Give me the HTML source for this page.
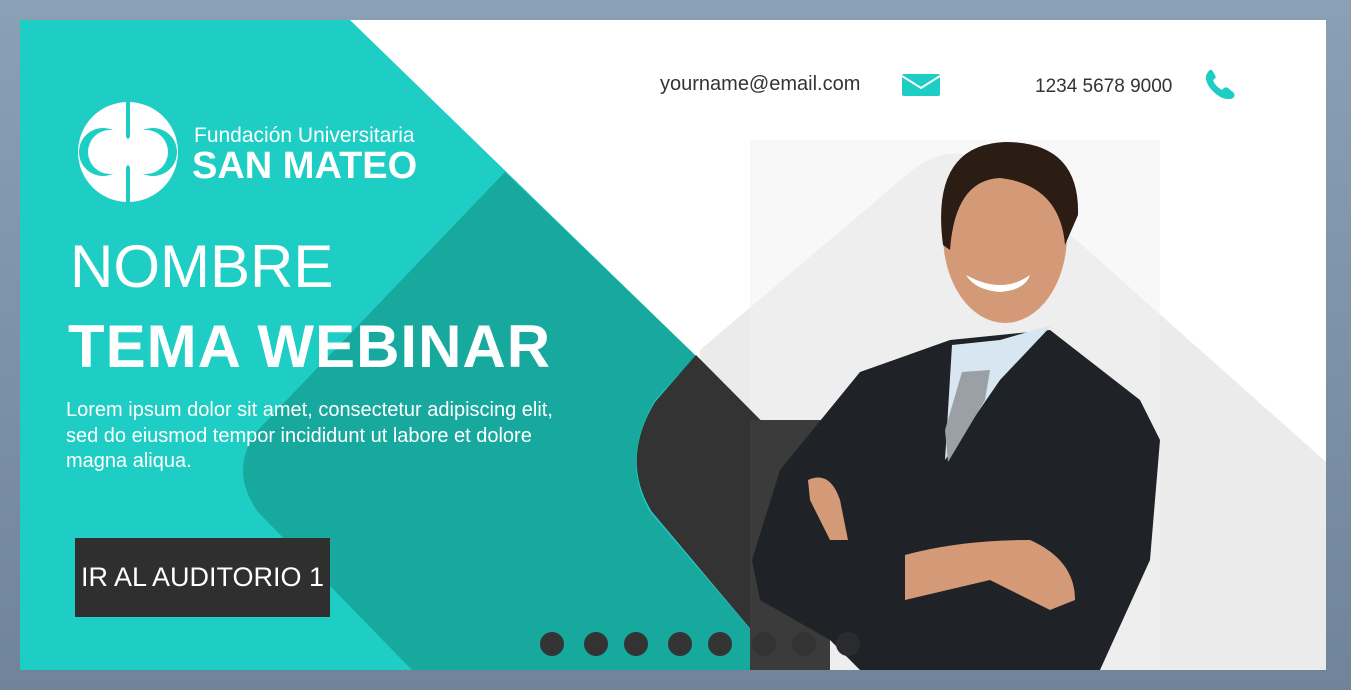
<!DOCTYPE html>
<html><head><meta charset="utf-8"><style>
*{margin:0;padding:0;box-sizing:border-box}
body{width:1351px;height:690px;overflow:hidden;background:linear-gradient(#8aa0b4,#6f8499);font-family:"Liberation Sans",sans-serif;position:relative}
.card{position:absolute;left:20px;top:20px;width:1306px;height:650px;background:#fff;overflow:hidden}
.t{position:absolute;color:#fff;white-space:nowrap}
</style></head><body>
<div class="card">
<svg width="1306" height="650" viewBox="20 20 1306 650" style="position:absolute;left:0;top:0">
<rect x="20" y="20" width="1306" height="650" fill="#fff"/>
<path d="M700,350 L910,172 Q955,135 1000,172 L1326,462 L1326,670 L700,670 Z" fill="#ebebeb"/>
<rect x="750" y="140" width="410" height="530" fill="#f2f2f2" opacity="0.5"/>
<path d="M20,20 L350,20 L696,356 L652,512 L785,670 L20,670 Z" fill="#1ecdc4"/>
<path d="M505,172 L258,430 Q228,470 258,512 L412,670 L785,670 L650,512 Q620,460 655,400 L696,356 Z" fill="#17a89e"/>
<path d="M696,355 L830,490 L830,670 L785,670 L652,512 Q620,460 655,402 Z" fill="#333"/>
<rect x="750" y="420" width="80" height="250" fill="#3b3b3b"/>
<!-- man -->
<path d="M860,372 L950,340 L1050,330 L1140,400 L1160,440 L1150,560 L1100,670 L860,670 L830,640 L760,600 L752,560 L780,470 Z" fill="#1f2226"/>
<path d="M952,345 L1000,340 L1052,325 L1000,380 L945,460 Z" fill="#d8e6f2"/>
<path d="M962,372 L990,370 L985,400 L948,462 L945,430 Z" fill="#9aa0a6"/>
<ellipse cx="1005" cy="235" rx="62" ry="88" fill="#d49a78"/>
<path d="M943,245 Q930,145 1005,142 Q1080,142 1078,215 L1065,245 Q1060,185 1000,178 Q955,180 950,250 Z" fill="#2b1c14"/>
<path d="M966,275 Q1002,295 1030,275 Q1025,290 1000,292 Q975,290 966,275Z" fill="#fff"/>
<path d="M808,480 Q830,470 840,500 L848,540 L830,540 L810,500 Z" fill="#d49a78"/>
<path d="M905,555 Q960,540 1030,540 Q1075,560 1075,600 L1050,610 L990,580 L905,600 Z" fill="#d49a78"/>
<!-- dots -->
<g fill="#333"><circle cx="552" cy="644" r="12"/><circle cx="596" cy="644" r="12"/><circle cx="636" cy="644" r="12"/><circle cx="680" cy="644" r="12"/><circle cx="720" cy="644" r="12"/><circle cx="764" cy="644" r="12"/><circle cx="804" cy="644" r="12"/><circle cx="848" cy="644" r="12" fill="#2a2c30"/></g>
<!-- logo -->
<circle cx="128" cy="152" r="50" fill="#fff"/>
<rect x="126" y="102" width="4" height="100" fill="#1ecdc4"/>
<circle cx="103" cy="152" r="24" fill="#1ecdc4"/><circle cx="110" cy="152" r="22" fill="#fff"/>
<circle cx="153" cy="152" r="24" fill="#1ecdc4"/><circle cx="146" cy="152" r="22" fill="#fff"/>
<!-- envelope -->
<rect x="902" y="74" width="38" height="22" rx="2" fill="#1ecdc4"/>
<path d="M902,76 L921,88 L940,76" stroke="#fff" stroke-width="2" fill="none"/>
<!-- phone -->
<path d="M1208,72 Q1203,78 1210,88 Q1220,100 1230,99 Q1236,98 1234,93 L1228,88 Q1225,86 1222,90 Q1215,86 1213,80 Q1217,78 1215,75 L1212,70 Q1210,69 1208,72Z" fill="#1ecdc4"/>
</svg>
<div class="t" style="left:174px;top:104px;font-size:21px;">Fundación Universitaria</div>
<div class="t" style="left:172px;top:125px;font-size:38px;font-weight:bold;">SAN MATEO</div>
<div class="t" style="left:640px;top:53px;font-size:20px;color:#333">yourname@email.com</div>
<div class="t" style="left:1015px;top:56px;font-size:19px;color:#333">1234 5678 9000</div>
<div class="t" style="left:50px;top:212px;font-size:60px;">NOMBRE</div>
<div class="t" style="left:48px;top:292px;font-size:60px;font-weight:bold;letter-spacing:1px">TEMA WEBINAR</div>
<div class="t" style="left:46px;top:378px;font-size:20px;line-height:25.5px">Lorem ipsum dolor sit amet, consectetur adipiscing elit,<br>sed do eiusmod tempor incididunt ut labore et dolore<br>magna aliqua.</div>
<div style="position:absolute;left:55px;top:518px;width:255px;height:79px;background:#2f2f2f;color:#fff;font-size:27px;line-height:79px;text-align:center">IR AL AUDITORIO 1</div>
</div>
</body></html>
